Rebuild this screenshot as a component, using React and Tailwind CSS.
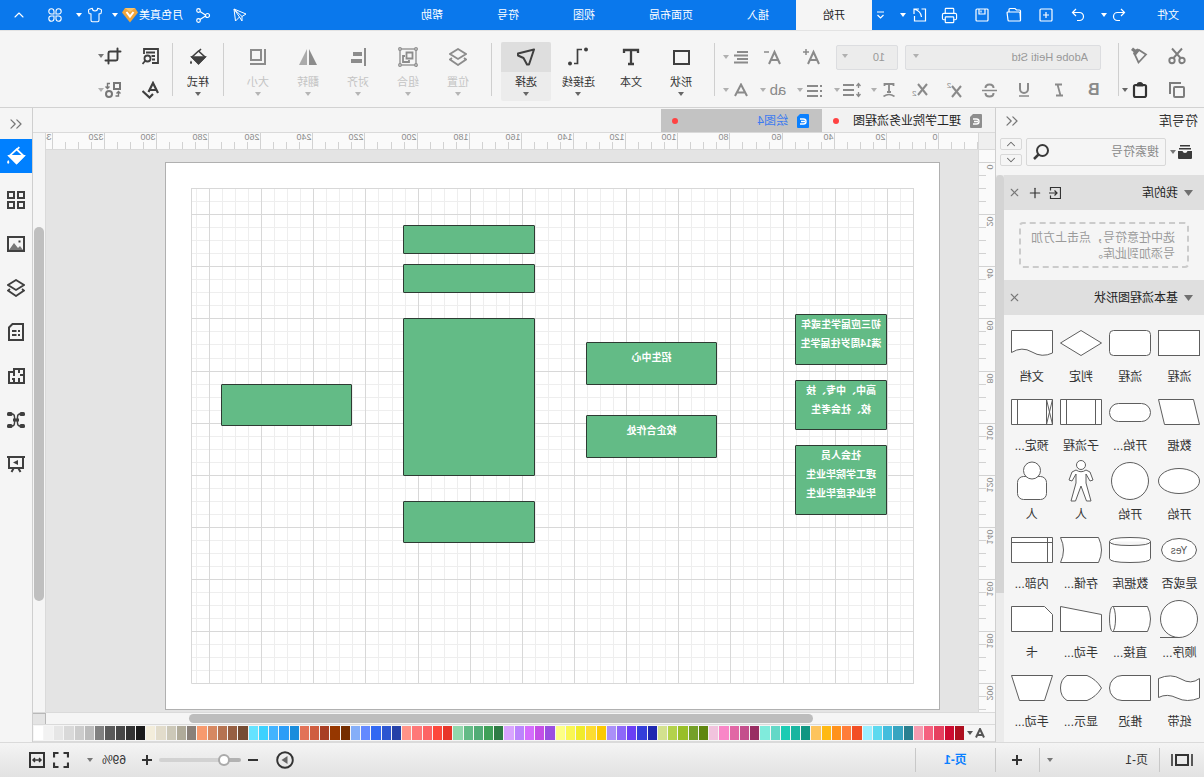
import { ChevronUp, ChevronDown, ChevronsLeft, Crop, Plus, Printer, Shirt, X } from 'lucide-react'

const UNIT = 2.607

const PALETTE = [
  ['#ae0f1f', '#cd0b30', '#e6405f', '#f5617f', '#f79bb0'],
  ['#2a8090', '#37a5c1', '#43bddd', '#5dd9ef', '#9cefff'],
  ['#f24f25', '#ff7d39', '#ff921c', '#ffb914', '#fdc45c'],
  ['#109682', '#19b5a0', '#1ccbb3', '#63d8c7', '#80ebdc'],
  ['#992d62', '#c44f8c', '#e167a5', '#f986c7', '#f1c3dd'],
  ['#5f8610', '#74a028', '#98bf28', '#b3d24b', '#d3e18e'],
  ['#1f28b0', '#343eda', '#6a3ff4', '#8d68f8', '#aa90f8'],
  ['#fbc903', '#fcdc31', '#f0eb2b', '#f9f653', '#fdff85'],
  ['#9a4fe0', '#c44fe6', '#d46dfc', '#bc84fd', '#d9a4ff'],
  ['#2f7c45', '#3fa058', '#52ac76', '#63bb86', '#91d7ac'],
  ['#e83529', '#fd483c', '#fd6465', '#fe7878', '#ff9388'],
  ['#2541a8', '#2c56d1', '#3168f2', '#6389ff', '#85aef8'],
  ['#752d00', '#963700', '#a83e24', '#cf5d40', '#e27258'],
  ['#1a8ddc', '#2b9df7', '#43b3fe', '#3dd1fe', '#65e3ff'],
  ['#754c33', '#965f42', '#b57351', '#d68861', '#f79a6e'],
  ['#898079', '#b0ab9a', '#ccc8b8', '#e2dccb', '#f3eddb'],
  ['#1a1a1a', '#333333', '#474747', '#595959', '#808080', '#bbbbbb', '#cccccc', '#d9d9d9', '#e6e6e6', '#f2f2f2', '#ffffff'],
].flat()

function Icon({ size = 18, box = 18, width = 2, className = '', children }) {
  return (
    <svg
      width={size}
      height={size}
      viewBox={`0 0 ${box} ${box}`}
      fill="none"
      stroke="currentColor"
      strokeWidth={width}
      className={`shrink-0 ${className}`}
      aria-hidden="true"
    >
      {children}
    </svg>
  )
}

function Caret({ className = '' }) {
  return (
    <svg width="6" height="4" viewBox="0 0 6 4" className={`shrink-0 ${className}`} aria-hidden="true">
      <path d="M0 0h6L3 4z" fill="currentColor" />
    </svg>
  )
}

function Divider() {
  return <div className="w-px h-[53px] mt-3 bg-[#cfcfcf] shrink-0" />
}

/* ---------- title bar ---------- */

function TitleBar() {
  const tabs = ['插入', '页面布局', '视图', '符号', '帮助']
  return (
    <header className="flex h-[30px] shrink-0 items-center bg-[#0a78ec] text-white text-[11px]">
      <button className="w-[72px] h-full">文件</button>
      <button aria-label="撤销" className="w-[25px] flex justify-center">
        <Icon size={14} box={14} width={1.2}>
          <path d="M5 1L1.5 4.5 5 8M1.5 4.5h7a4 4 0 0 1 0 8H6" />
        </Icon>
      </button>
      <Caret />
      <button aria-label="重做" className="ml-[7px] w-8 flex justify-center">
        <Icon size={14} box={14} width={1.2}>
          <path d="M9 1l3.5 3.5L9 8M12.5 4.5h-7a4 4 0 0 0 0 8H8" />
        </Icon>
      </button>
      <button aria-label="新建" className="w-8 flex justify-center">
        <Icon size={14} box={14} width={1.2}>
          <rect x="1" y="1" width="12" height="12" rx="1" />
          <path d="M7 4v6M4 7h6" />
        </Icon>
      </button>
      <button aria-label="打开" className="w-8 flex justify-center">
        <Icon size={16} box={16} width={1.2}>
          <path d="M1.5 13V4q0-1 1-1h3L7 1.500h5q1 0 1 1V5M1.500 13L2 6q0-1 1-1h11q1 0 .9 1l-.9 7q0 1-1 1H2.500q-1 0-1-1z" />
        </Icon>
      </button>
      <button aria-label="保存" className="w-8 flex justify-center">
        <Icon size={14} box={14} width={1.2}>
          <rect x="1" y="1" width="12" height="12" rx="1" />
          <path d="M4 1v5h6V1M8 2.5v2" />
        </Icon>
      </button>
      <button aria-label="打印" className="w-8 flex justify-center">
        <Printer size={17} strokeWidth={1.6} />
      </button>
      <button aria-label="导出" className="w-7 flex justify-center">
        <Icon size={14} box={14} width={1.2}>
          <path d="M5.5 1h-4v12h11V8M8 1h5v5M13 1Q6 3 5.5 9" />
        </Icon>
      </button>
      <Caret />
      <button aria-label="更多" className="ml-[10px] w-[18px] flex justify-center">
        <Icon size={9} box={9} width={1.2}>
          <path d="M1 1h7M1.5 4l3 3 3-3" />
        </Icon>
      </button>
      <nav className="flex h-full">
        <button className="w-[76px] h-full bg-[#f5f5f5] text-[#222]">开始</button>
        {tabs.map((t) => (
          <button key={t} className={t.length > 2 ? 'w-[98px]' : 'w-[76px]'}>
            {t}
          </button>
        ))}
      </nav>
      <div className="ml-auto flex items-center h-full">
        <button aria-label="发送" className="mr-[22px]">
          <Icon size={14} box={14} width={1}>
            <path d="M13 1L1 6l4 2.500zM13 1L7.500 9l4 4zM5 8.500V13l2.500-4" />
          </Icon>
        </button>
        <button aria-label="分享" className="mr-[13px]">
          <Icon size={15} box={15} width={1.2}>
            <circle cx="3.5" cy="7.5" r="2" />
            <circle cx="12.5" cy="2.5" r="1.8" />
            <circle cx="12.5" cy="12.5" r="1.8" />
            <path d="M5.500 7L11 3.500M5.500 8l5.500 3.500" />
          </Icon>
        </button>
        <button className="flex items-center">
          <span>月色真美</span>
          <svg width="16" height="15" viewBox="0 0 16 15" className="ml-px" aria-hidden="true">
            <path d="M3 0h10l3 4.500-8 10-8-10z" fill="#f0a63c" />
            <path d="M3 0h10L8 4z" fill="#f8c46c" />
            <path d="M4.500 4L8 8.500 11.500 4" fill="none" stroke="#fff" strokeWidth="2" />
          </svg>
          <Caret className="ml-1" />
        </button>
        <button aria-label="主题" className="ml-[9px] flex items-center gap-[5px]">
          <Shirt size={16} strokeWidth={1.6} />
          <Caret />
        </button>
        <button aria-label="应用" className="ml-1 w-[34px] flex justify-center">
          <Icon size={14} box={14} width={1.1}>
            <path d="M6 6H3.300A2.600 2.600 0 1 1 6 3.300zM8 6V3.300A2.600 2.600 0 1 1 10.700 6zM6 8v2.700A2.600 2.600 0 1 1 3.300 8zM8 8h2.700A2.600 2.600 0 1 1 8 10.700z" />
          </Icon>
        </button>
        <button aria-label="收起" className="w-[38px] flex justify-center">
          <ChevronUp size={16} strokeWidth={1.6} />
        </button>
      </div>
    </header>
  )
}

/* ---------- ribbon ---------- */

function BucketIcon({ size = 18 }) {
  return (
    <Icon size={size} width={1.6}>
      <path d="M6 1l2.500 2.500M8.500 3L15 9l-6.500 6.500L2 9z" />
      <path d="M2 9h13l-6.500 6.500z" fill="currentColor" />
      <path d="M16 12.500q2 2.500 0 3.500-2-1 0-3.500z" fill="currentColor" stroke="none" />
    </Icon>
  )
}

function LayersIcon() {
  return (
    <Icon width={1.8}>
      <path d="M9 1l8 5-8 5-8-5zM3 10l-2 1.500L9 17l8-5.500-2-1.500" />
    </Icon>
  )
}

function BigButton({ label, icon, caret = true, wide, disabled, active }) {
  return (
    <button
      disabled={disabled}
      className={`flex flex-col items-center h-[59px] rounded-xs text-[11px] ${wide ? 'w-[55px]' : 'w-[50px]'} ${
        disabled ? 'text-[#c4c4c4]' : 'text-[#333]'
      } ${active ? 'bg-[#ececec]' : ''}`}
    >
      <span
        className={`flex h-[30px] w-full items-center justify-center rounded-t-xs ${active ? 'bg-[#dedede]' : ''} ${
          disabled ? 'text-[#8c8c8c]' : 'text-[#3f3f3f]'
        }`}
      >
        {icon}
      </span>
      <span className="leading-4 mt-0.5">{label}</span>
      {caret && <Caret className={disabled ? 'mt-0.5 text-[#b5b5b5]' : 'mt-0.5 text-[#666]'} />}
    </button>
  )
}

function MenuTool({ label, children }) {
  return (
    <button aria-label={label} className="flex w-[37px] items-center gap-px">
      <span className="flex w-[22px] justify-center">{children}</span>
      <Caret className="text-[#b0b0b0]" />
    </button>
  )
}

function FontGroup() {
  const tool = 'w-[35px] flex justify-center items-baseline'
  const select =
    'h-[25px] w-full appearance-none rounded-xs border border-[#dcdde0] bg-[#ececec] pl-3 text-[11px] text-[#999]'
  return (
    <div className="w-[403px] pt-[10px] text-[#8a8a8a] shrink-0">
      <div className="flex h-8 items-center pl-[17px]">
        <label className="relative w-[196px]">
          <select aria-label="字体" className={select}>
            <option>Adobe Heiti Std</option>
          </select>
          <Caret className="absolute right-2 top-[10px] text-[#b0b0b0]" />
        </label>
        <label className="relative ml-[7px] w-[62px]">
          <select aria-label="字号" className={select}>
            <option>10</option>
          </select>
          <Caret className="absolute right-1.5 top-[10px] text-[#b0b0b0]" />
        </label>
        <button aria-label="增大字号" className="flex w-[50px] justify-center">
          <Icon>
            <path d="M1 16L6.500 4 12 16M3 12h7" />
            <path d="M11 4h6M14 1v6" strokeWidth="1.5" />
          </Icon>
        </button>
        <button aria-label="减小字号" className="flex w-7 justify-center">
          <Icon>
            <path d="M1 16L6.500 4 12 16M3 12h7" />
            <path d="M12 4h5" strokeWidth="1.5" />
          </Icon>
        </button>
        <button aria-label="对齐方式" className="ml-[10px] flex items-center gap-[5px]">
          <Icon size={14} box={14}>
            <path d="M0 2h11M0 5.500h14M0 9h11M0 12.500h14" strokeWidth="1.8" />
          </Icon>
          <Caret className="text-[#b0b0b0]" />
        </button>
      </div>
      <div className="flex h-[34px] items-center pl-[7px] text-base">
        <button aria-label="加粗" className={`${tool} font-bold`}>B</button>
        <button aria-label="斜体" className={tool}>
          <Icon size={14} box={14}>
            <path d="M4 1.500h7M3 12.500h7M8.500 1.500l-3 11" strokeWidth="1.8" />
          </Icon>
        </button>
        <button aria-label="下划线" className={tool}>
          <Icon size={14} box={14}>
            <path d="M3 0v6a4 4 0 0 0 8 0V0" />
            <path d="M2 13h10" strokeWidth="1.5" />
          </Icon>
        </button>
        <button aria-label="删除线" className={tool}>
          <Icon size={15} box={15}>
            <path d="M11.500 5q0-3.500-4-3.500T3.500 5M3.500 10q0 3.500 4 3.500t4-3.500" />
            <path d="M0 7.500h15" strokeWidth="1.5" />
          </Icon>
        </button>
        <button aria-label="上标" className={tool}>
          <Icon>
            <path d="M2 5l9 11M11 5L2 16" />
          </Icon>
          <span className="-ml-1.5 self-start text-[8px] leading-[10px]">2</span>
        </button>
        <button aria-label="下标" className={tool}>
          <Icon>
            <path d="M2 3l9 11M11 3L2 14" />
          </Icon>
          <span className="-ml-1.5 self-end text-[8px] leading-[10px]">2</span>
        </button>
        <div className="ml-[3px] flex">
          <MenuTool label="文字方向">
            <Icon size={14} box={14}>
              <path d="M2.500 3V1h9v2M7 1v8M5 9h4" strokeWidth="1.8" />
              <path d="M1.500 13.500Q7 9.500 12.500 13.500" strokeWidth="1.6" />
            </Icon>
          </MenuTool>
          <MenuTool label="行距">
            <Icon>
              <path d="M7 4h11M7 9h11M7 14h11" />
              <path d="M2.500 3v4M2.500 11v4M.5 5l2-2.500 2 2.500M.5 13l2 2.500 2-2.500" strokeWidth="1.3" />
            </Icon>
          </MenuTool>
          <MenuTool label="项目符号">
            <Icon size={15} box={15}>
              <path d="M4 3h11M4 8h11M4 13h11M0 3h2M0 8h2M0 13h2" />
            </Icon>
          </MenuTool>
          <MenuTool label="大小写">
            <span className="text-[15px] leading-4">ab</span>
          </MenuTool>
          <MenuTool label="字体颜色">
            <Icon size={14} box={14}>
              <path d="M1 13L7 1.500 13 13M3.500 9.500h7" />
            </Icon>
          </MenuTool>
        </div>
      </div>
    </div>
  )
}

function Ribbon() {
  return (
    <div className="flex h-[78px] shrink-0 border-b border-[#d2d2d2] border-t border-t-[#e3e3e3] bg-[#f5f5f5]">
      <div className="w-[85px] shrink-0 pt-2 text-[#7d7d7d]">
        <div className="flex h-[34px] items-center gap-5 pl-[18px]">
          <button aria-label="剪切">
            <Icon width={1.9}>
              <circle cx="4" cy="13.500" r="2.700" />
              <circle cx="14" cy="13.500" r="2.700" />
              <path d="M5.500 11L14 1.500M12.500 11L4 1.500" />
            </Icon>
          </button>
          <button aria-label="格式刷">
            <Icon width={1.8}>
              <path d="M2 7.500L9 3l4 5-3.500 7.500z" />
              <path d="M8.500 3L13 8.500l2-1.500-.5-2L17 3l-2-2.500-2.500 2-2-1z" fill="currentColor" stroke="none" />
            </Icon>
          </button>
        </div>
        <div className="flex h-[34px] items-center gap-5 pl-[18px]">
          <button aria-label="复制">
            <Icon width={2}>
              <rect x="2" y="6" width="10" height="10" rx="1" />
              <path d="M5 2h11v11" />
            </Icon>
          </button>
          <button aria-label="粘贴" className="flex items-center gap-1 text-[#333]">
            <Icon size={16} box={16} width={2.2}>
              <rect x="2" y="3" width="12" height="12" rx="1.500" />
              <path d="M5.500 3.500Q5.500 1 8 1t2.500 2.500z" strokeWidth="1.8" />
            </Icon>
            <Caret className="text-[#666]" />
          </button>
        </div>
      </div>
      <Divider />
      <FontGroup />
      <Divider />
      <div className="flex pl-2 pr-[9px] pt-[11px]">
        <BigButton label="形状" icon={<Icon><rect x="1" y="3" width="15" height="13" /></Icon>} />
        <BigButton
          label="文本"
          caret={false}
          icon={<Icon><path d="M2 5V2h14v3M9 2v14M6 16h6" strokeWidth="2.300" /></Icon>}
        />
        <BigButton
          label="连接线"
          wide
          icon={
            <Icon size={20} box={20}>
              <path d="M6 2.500h4.500v14H14" strokeWidth="1.700" />
              <circle cx="2" cy="2.500" r="2" fill="currentColor" stroke="none" />
              <circle cx="18" cy="16.500" r="2" fill="currentColor" stroke="none" />
            </Icon>
          }
        />
        <BigButton
          label="选择"
          active
          icon={<Icon><path d="M1 1.500l16 4v2L11.500 10 8 16.500H6z" strokeLinejoin="round" /></Icon>}
        />
      </div>
      <Divider />
      <div className="flex pl-2 pr-[9px] pt-[11px]">
        <BigButton label="位置" disabled icon={<LayersIcon />} />
        <BigButton
          label="组合"
          disabled
          icon={
            <Icon size={20} box={20} width={1.300}>
              <rect x="2" y="2" width="16" height="16" />
              <g fill="#f5f5f5">
                <circle cx="2" cy="2" r="1.300" />
                <circle cx="18" cy="2" r="1.300" />
                <circle cx="2" cy="18" r="1.300" />
                <circle cx="18" cy="18" r="1.300" />
              </g>
              <path d="M5.500 5.500h6v6h-6zM13 9h2v6H9v-2" strokeWidth="1.800" />
            </Icon>
          }
        />
        <BigButton
          label="对齐"
          disabled
          icon={
            <Icon>
              <path d="M2 0v18" />
              <path d="M5 4h9v4H5zM5 11h11v4H5z" fill="currentColor" stroke="none" />
            </Icon>
          }
        />
        <BigButton
          label="翻转"
          disabled
          icon={
            <Icon>
              <path d="M8 1v16H0z" fill="currentColor" stroke="none" />
              <path d="M10 1v16h8z" fill="#aaa" stroke="none" />
            </Icon>
          }
        />
        <BigButton
          label="大小"
          disabled
          icon={<Icon><path d="M6 2h10v10H6zM2 1v15h15" /></Icon>}
        />
      </div>
      <Divider />
      <div className="flex pt-[11px]">
        <BigButton label="样式" icon={<BucketIcon />} />
      </div>
      <Divider />
      <div className="pt-2 text-[#3f3f3f]">
        <div className="flex h-[34px] items-center gap-5 pl-3">
          <button aria-label="查找">
            <Icon width={1.8}>
              <path d="M8 16H2V2h14v5M5 5.500h9M5 9h3.500M5 12.500h3" />
              <circle cx="12.500" cy="11.500" r="3" />
              <path d="M14.500 13.500l3 3.500" />
            </Icon>
          </button>
          <button aria-label="裁剪" className="flex items-center">
            <Crop size={18} strokeWidth={2.6} />
            <Caret className="text-[#777]" />
          </button>
        </div>
        <div className="flex h-[34px] items-center gap-5 pl-3">
          <button aria-label="拼写检查">
            <Icon width={2.2}>
              <path d="M2 12L7 2l4.500 9M4 9h6M7 13l3.500 3.500L17.500 10" />
            </Icon>
          </button>
          <button aria-label="替换" className="flex items-center text-[#777]">
            <Icon>
              <rect x="2" y="2" width="6" height="6" />
              <circle cx="13" cy="13" r="3" />
              <path d="M12 2.500h2.500V7M12.500 5.500l2 2 2-2M6.500 15h-3v-4M1.500 12.500l2-2 2 2" strokeWidth="1.400" />
            </Icon>
            <Caret className="text-[#b0b0b0]" />
          </button>
        </div>
      </div>
    </div>
  )
}

/* ---------- symbol library ---------- */

const SYMBOLS = [
  { name: '流程', art: <rect x="0.5" y="8.5" width="41" height="25" /> },
  { name: '流程', art: <rect x="0.5" y="8.5" width="41" height="25" rx="4" /> },
  { name: '判定', art: <path d="M21 8.500L41.500 21 21 33.500.5 21z" /> },
  { name: '文档', art: <path d="M.5 8.500h41v22Q31 24 21 30T.5 31z" /> },
  { name: '数据', art: <path d="M6.500 8.500h35l-6 25H.5z" /> },
  { name: '开始...', art: <rect x="0.5" y="12.5" width="41" height="18" rx="9" /> },
  { name: '子流程', art: <path d="M.5 8.500h41v25H.5zM6.500 8.500v25M35.500 8.500v25" /> },
  { name: '预定...', art: <path d="M.5 8.500h41v25H.5zM6.500 8.500v25M35.500 8.500v25M.5 8.500l6 25M6.500 8.500l-6 25" /> },
  { name: '开始', art: <ellipse cx="21" cy="21" rx="20.5" ry="12.5" /> },
  { name: '开始', art: <circle cx="21" cy="21" r="18.5" /> },
  {
    name: '人',
    art: (
      <>
        <path d="M16 10l-4 2-3 8 3 1 4-7v9l-5 18h4.500L21 26l5.500 15H31l-5-18v-9l4 7 3-1-3-8-4-2q-5 3.500-10 0z" />
        <circle cx="21" cy="5" r="4.5" />
      </>
    ),
  },
  {
    name: '人',
    art: (
      <>
        <rect x="6.5" y="16.5" width="29" height="23" rx="6" />
        <circle cx="21" cy="10.5" r="8.5" />
      </>
    ),
  },
  {
    name: '是或否',
    art: (
      <>
        <ellipse cx="21" cy="21" rx="17.5" ry="11.5" />
        <text x="21" y="25" textAnchor="middle" fontSize="10" fill="#555" stroke="none">Yes</text>
      </>
    ),
  },
  { name: '数据库', art: <path d="M.5 12.500v17q0 4 20.500 4t20.500-4v-17M.5 12.500q0-4 20.500-4t20.500 4-20.500 4-20.500-4z" /> },
  { name: '存储...', art: <path d="M3.500 8.500h38q-6 12.500 0 25h-38q-6-12.500 0-25z" /> },
  { name: '内部...', art: <path d="M.5 8.500h41v25H.5zM5.500 8.500v25M.5 13.500h41" /> },
  { name: '顺序...', art: <><circle cx="21" cy="21" r="18.5" /><path d="M21 39.500h19" /></> },
  { name: '直接...', art: <><path d="M38.500 8.500h-35q-6 12.500 0 25h35" /><ellipse cx="38.5" cy="21" rx="3" ry="12.5" /></> },
  { name: '手动...', art: <path d="M.5 16.500l41-8v25H.5z" /> },
  { name: '卡', art: <path d="M8.500 8.500h33v25H.5v-17z" /> },
  { name: '纸带', art: <path d="M.5 11.500Q9 18 19 12t22.500-.5v19Q33 26 23 31T.5 31z" /> },
  { name: '推迟', art: <path d="M.5 8.500H29a12.500 12.500 0 0 1 0 25H.5z" /> },
  { name: '显示...', art: <path d="M.5 21Q6 12 15 8.500h20q6.500 4 6.500 12.500T35 33.500H15Q6 30 .5 21z" /> },
  { name: '手动...', art: <path d="M.5 8.500h41l-8 25h-25z" /> },
]

function SectionHeader({ title, children }) {
  return (
    <div className="flex h-[35px] items-center bg-[#dfdfdf] pl-[11px] pr-1 text-xs text-[#222]">
      <svg width="9" height="6" viewBox="0 0 9 6" className="mr-1.5" aria-hidden="true">
        <path d="M0 0h9L4.500 6z" fill="#707070" />
      </svg>
      <h2 className="flex-1">{title}</h2>
      <div className="flex items-center gap-1.5 text-[#333]">
        {children}
        <button aria-label="关闭" className="text-[#777]">
          <X size={13} strokeWidth={2} />
        </button>
      </div>
    </div>
  )
}

function SymbolPanel() {
  return (
    <aside className="flex w-[209px] shrink-0 flex-col border-r border-[#cfcfcf] bg-[#f5f5f5] text-[#333]">
      <div className="flex h-[25px] items-center justify-between pl-[6px] pr-[6px]">
        <h1 className="text-[13px]">符号库</h1>
        <button aria-label="折叠" className="text-[#777]">
          <ChevronsLeft size={20} strokeWidth={1.5} />
        </button>
      </div>
      <div className="flex items-center pl-3 pr-1 pt-[5px]">
        <button aria-label="符号库菜单" className="flex items-center gap-0.5 text-[#3a3a3a]">
          <svg width="14" height="14" viewBox="0 0 14 14" fill="currentColor" aria-hidden="true">
            <path d="M2 0h10v1.500H2zM1 3h12v1.500H1zM0 6h4.500Q5 8 7 8t2.500-2H14v7q0 1-1 1H1q-1 0-1-1z" />
          </svg>
          <Caret className="text-[#777]" />
        </button>
        <label className="ml-1 flex h-[28px] w-[140px] items-center rounded-xs border border-[#d8d8d8] pl-1.5 pr-1.5">
          <input aria-label="搜索符号" placeholder="搜索符号" className="w-0 flex-1 bg-transparent text-xs placeholder:text-[#8a8a8a]" />
          <Icon size={16} box={16} className="text-[#3a3a3a]">
            <circle cx="6.500" cy="6.500" r="5.500" />
            <path d="M10.500 10.500L15 15" strokeWidth="2.5" />
          </Icon>
        </label>
        <div className="ml-1 flex flex-1 flex-col gap-1 text-[#666]">
          <button aria-label="上一个" className="flex h-3 items-center justify-center rounded-xs border border-[#d8d8d8]">
            <ChevronUp size={14} strokeWidth={1.8} />
          </button>
          <button aria-label="下一个" className="flex h-3 items-center justify-center rounded-xs border border-[#d8d8d8]">
            <ChevronDown size={14} strokeWidth={1.8} />
          </button>
        </div>
      </div>
      <div className="mt-[9px] flex flex-1">
        <div className="w-[200px]">
          <SectionHeader title="我的库">
            <button aria-label="导入">
              <Icon size={12} box={12} width={1.2}>
                <path d="M10.500 3.500v-3H.5v11h10v-3M12 6H4M6.500 3.500L4 6l2.500 2.500" />
              </Icon>
            </button>
            <button aria-label="添加">
              <Plus size={16} strokeWidth={1.8} />
            </button>
          </SectionHeader>
          <div className="mx-[15px] my-3 h-[46px] rounded-sm border-2 border-dashed border-[#cbcbcb] pl-[12px] pt-1.5 text-xs leading-4 text-[#9a9a9a]">
            <p className="w-[148px]">选中任意符号，点击上方加号添加到此库。</p>
          </div>
          <SectionHeader title="基本流程图形状" />
          <ul className="grid w-[197px] grid-cols-4 pt-[5px]">
            {SYMBOLS.map((s, i) => (
              <li key={i} className="flex h-[69px] flex-col items-center text-xs">
                <svg width="42" height="46" viewBox="0 -2 42 46" fill="#fff" stroke="#5e5e5e" aria-hidden="true">
                  {s.art}
                </svg>
                <span className="mt-0.5 leading-[18px]">{s.name}</span>
              </li>
            ))}
          </ul>
        </div>
        <div className="w-2 bg-[#ebebeb]">
          <div className="h-[418px] rounded-t-full bg-[#d4d4d4]" />
        </div>
      </div>
    </aside>
  )
}

/* ---------- drawing area ---------- */

function DocTab({ name, active, color }) {
  return (
    <button
      className={`flex h-[23px] items-center pl-[13px] pr-[11px] text-xs ${
        active ? 'w-[161px] bg-[#c3c3c3] text-[#3d7bf0]' : 'w-[173px] bg-[#f2f2f2] text-[#222]'
      }`}
    >
      <svg width="12" height="14" viewBox="0 0 12 14" className="mr-[9px]" aria-hidden="true">
        <path d="M1 0h8l3 3v10q0 1-1 1H1q-1 0-1-1V1q0-1 1-1z" fill={color} />
        <path d="M9 5H5.500a2.500 2.500 0 0 0 0 5H9M4 7.500h4" fill="none" stroke="#fff" strokeWidth="1.4" />
      </svg>
      {name}
      <span className="ml-auto size-1.5 rounded-full bg-[#ff4242]" />
    </button>
  )
}

// ruler ticks every 5 units, a number every 20; origin is the pixel of the zero mark
function Ruler({ vertical, origin, from, to }) {
  const marks = []
  for (let u = from; u <= to; u += 5) marks.push(u)
  return (
    <svg
      className={vertical ? 'h-full w-4 shrink-0 bg-[#fafafa]' : 'h-4 min-w-0 flex-1 bg-[#fafafa]'}
      stroke="#d2d2d2"
      fontSize="9"
      aria-hidden="true"
    >
      {marks.map((u) => {
        const p = Math.round(origin + u * UNIT) + 0.5
        const start = u % 20 === 0 ? 0 : 9
        return (
          <g key={u}>
            {vertical ? <path d={`M${start} ${p}H16`} /> : <path d={`M${p} ${start}V16`} />}
            {u % 20 === 0 && (
              <text
                x={vertical ? 0 : p + 1}
                y={vertical ? 0 : 7}
                transform={vertical ? `translate(8 ${p + 2}) rotate(-90)` : undefined}
                textAnchor={vertical ? 'end' : 'start'}
                fill="#8c8c8c"
                stroke="none"
              >
                {Math.abs(u)}
              </text>
            )}
          </g>
        )
      })}
    </svg>
  )
}

function GridLines() {
  const cols = []
  const rows = []
  for (let u = 10; u < 287; u += 5) cols.push(u)
  for (let u = 10; u <= 200; u += 5) rows.push(u)
  const at = (u) => Math.round(u * UNIT) - 0.5
  const minor = (u) => u % 20 !== 0 && u !== 10
  const xs = cols.map((u) => ({ p: at(u), minor: minor(u) })).concat({ p: at(287), minor: false })
  const ys = rows.map((u) => ({ p: at(u), minor: minor(u) }))
  const x2 = at(287)
  const y2 = at(200)
  return (
    <svg className="absolute inset-0 size-full" aria-hidden="true">
      {[true, false].map((m) => (
        <g key={String(m)} stroke={m ? '#eeeeee' : '#d8d8d8'}>
          {xs.filter((l) => l.minor === m).map((l) => <path key={`x${l.p}`} d={`M${l.p} 25V${y2}`} />)}
          {ys.filter((l) => l.minor === m).map((l) => <path key={`y${l.p}`} d={`M25 ${l.p}H${x2}`} />)}
        </g>
      ))}
    </svg>
  )
}

const NODES = [
  { box: 'left-[52px] top-[151px] w-[92px] h-[51px]', lines: ['初三应届学生或年', '满14周岁往届学生'] },
  { box: 'left-[52px] top-[217px] w-[92px] h-[50px]', lines: ['高中、中专、技', '校、社会考生'] },
  { box: 'left-[52px] top-[282px] w-[92px] h-[70px]', lines: ['社会人员', '理工学院毕业生', '毕业年度毕业生'] },
  { box: 'left-[222px] top-[179px] w-[131px] h-[43px] pt-[5px]', lines: ['招生中心'] },
  { box: 'left-[222px] top-[252px] w-[131px] h-[43px] pt-[5px]', lines: ['校企合作处'] },
  { box: 'left-[404px] top-[62px] w-[132px] h-[29px]', lines: [] },
  { box: 'left-[404px] top-[101px] w-[132px] h-[29px]', lines: [] },
  { box: 'left-[404px] top-[155px] w-[132px] h-[158px]', lines: [] },
  { box: 'left-[404px] top-[338px] w-[132px] h-[42px]', lines: [] },
  { box: 'left-[587px] top-[221px] w-[131px] h-[42px]', lines: [] },
]

function Canvas() {
  return (
    <div className="min-w-0 flex-1 overflow-hidden bg-[#e4e4e4] pl-[38px] pt-3">
      <div className="relative h-[548px] w-[775px] border border-[#b0b0b0] bg-white">
        <GridLines />
        {NODES.map((n, i) => (
          <div
            key={i}
            className={`absolute rounded-[1px] border border-[#2e3b33] bg-[#63bb86] text-center text-[10px] font-bold leading-[19px] text-white ${n.box}`}
          >
            {n.lines.map((l) => (
              <p key={l}>{l}</p>
            ))}
          </div>
        ))}
      </div>
    </div>
  )
}

function Workspace() {
  return (
    <main className="flex min-w-0 flex-1 flex-col bg-[#f5f5f5]">
      <div className="flex h-[25px] shrink-0 border-b border-[#dadada] pt-px">
        <DocTab name="理工学院业务流程图" color="#8e8e8e" />
        <DocTab name="绘图4" color="#0a80ff" active />
      </div>
      <div className="flex min-h-0 flex-1">
        <div className="flex min-w-0 flex-1 flex-col">
          <div className="flex h-[17px] shrink-0 border-b border-[#dadada]">
            <div className="w-[17px] border-r border-[#dadada] bg-[#efefef]" />
            <Ruler origin={39} from={-20} to={350} />
          </div>
          <div className="flex min-h-0 flex-1">
            <div className="w-[17px] border-r border-[#dadada]">
              <Ruler vertical origin={12} from={0} to={210} />
            </div>
            <Canvas />
          </div>
        </div>
        <div className="w-[13px] shrink-0 border-l border-[#dadada] px-px pt-[94px]">
          <div className="h-[374px] rounded-full bg-[#bfbfbf]" />
        </div>
      </div>
      <div className="flex h-[13px] shrink-0 border-y border-[#dadada]">
        <div className="flex-1 pl-[182px] pt-px">
          <div className="h-[9px] w-[624px] rounded-full bg-[#bdbdbd]" />
        </div>
        <div className="w-[13px] border-l border-t border-[#b8b8b8] bg-[#e4e4e4]" />
      </div>
      <div className="flex h-[17px] shrink-0 items-center border-b border-[#dadada]">
        <button aria-label="填充颜色" className="flex w-[31px] items-center gap-0.5 pl-2.5 text-[#555]">
          <Icon size={10} box={10}>
            <path d="M1 9.500L5 1l4 8.500M2.500 7h5" />
          </Icon>
          <Caret />
        </button>
        <div className="flex h-[14px] flex-1 gap-px">
          {PALETTE.map((c) => (
            <button key={c} aria-label={c} className="flex-1" style={{ backgroundColor: c }} />
          ))}
        </div>
      </div>
    </main>
  )
}

/* ---------- side tools ---------- */

const SIDE_TOOLS = [
  {
    name: '符号',
    icon: <Icon><path d="M1 1h6v6H1zM11 1h6v6h-6zM1 11h6v6H1zM11 11h6v6h-6z" /></Icon>,
  },
  {
    name: '图片',
    icon: (
      <Icon>
        <rect x="1" y="2" width="16" height="14" />
        <path d="M2 15l3-4 2 2 4-5 5 7z" fill="#777" stroke="none" />
        <path d="M4.500 5.500h2v2h-2z" fill="currentColor" stroke="none" />
      </Icon>
    ),
  },
  { name: '图层', icon: <LayersIcon /> },
  {
    name: '备注',
    icon: <Icon><path d="M2 1h10.500L16 4.500V17H2zM5 8h2M8.500 8H13M5 12h2M8.500 12H13" /></Icon>,
  },
  {
    name: '平面图',
    icon: <Icon><path d="M1 2h10v3h5v11H1zM6 2v4M1 8h4M11 5v4M6 16v-5M11 16v-4h2" /></Icon>,
  },
  {
    name: '思维导图',
    icon: (
      <Icon>
        <path d="M5 3q2.500 0 2.500 3T9 9t1.500-3T13 3M5 15q2.500 0 2.500-3T9 9t1.500 3 2.500 3" strokeWidth="1.4" />
        <g fill="currentColor" stroke="none">
          <rect x="0" y="1" width="5.500" height="4" rx="1.500" />
          <rect x="12.500" y="1" width="5.500" height="4" rx="1.500" />
          <rect x="0" y="13" width="5.500" height="4" rx="1.500" />
          <rect x="12.500" y="13" width="5.500" height="4" rx="1.500" />
          <rect x="6" y="7.500" width="6" height="3" />
        </g>
      </Icon>
    ),
  },
  {
    name: '演示',
    icon: (
      <Icon>
        <path d="M0 2h18M2 2v11h14V2M6.500 13.500l-2 3.500M11.500 13.500l2 3.500" />
        <path d="M7 5l5 2.500L7 10z" fill="currentColor" stroke="none" />
      </Icon>
    ),
  },
]

function SideTools() {
  return (
    <aside className="flex w-[33px] shrink-0 flex-col items-stretch gap-[10px] border-l border-[#cfcfcf] bg-[#f5f5f5] text-[#3f3f3f]">
      <div>
        <button aria-label="展开" className="flex h-[31px] w-full items-center justify-center text-[#777]">
          <ChevronsLeft size={20} strokeWidth={1.5} />
        </button>
        <button aria-label="填充" className="flex h-[34px] w-full items-center justify-center bg-[#0080ff] text-white">
          <BucketIcon size={20} />
        </button>
      </div>
      {SIDE_TOOLS.map((t) => (
        <button key={t.name} aria-label={t.name} className="flex h-[34px] items-center justify-center">
          {t.icon}
        </button>
      ))}
    </aside>
  )
}

/* ---------- status bar ---------- */

function StatusBar() {
  return (
    <footer className="flex h-[35px] shrink-0 items-center border-t border-[#dadada] bg-linear-to-b from-[#f4f4f4] to-[#e2e2e2] text-xs text-[#333]">
      <button aria-label="视图" className="flex w-11 justify-center">
        <Icon size={22} box={22}>
          <path d="M1 5v12M21 5v12" strokeWidth="1.6" />
          <rect x="5" y="6" width="12" height="10" />
        </Icon>
      </button>
      <div className="h-6 w-px bg-[#c8c8c8]" />
      <label className="relative w-[119px]">
        <select aria-label="页面" className="w-full appearance-none bg-transparent pl-[11px]">
          <option>页-1</option>
        </select>
        <Caret className="absolute right-[7px] top-[6px] text-[#777]" />
      </label>
      <div className="h-6 w-px bg-[#c8c8c8]" />
      <button aria-label="新增页面" className="flex w-[43px] justify-center">
        <Icon size={10} box={10}>
          <path d="M5 0v10M0 5h10" />
        </Icon>
      </button>
      <div className="h-6 w-px bg-[#c8c8c8]" />
      <button className="w-[79px] font-bold text-[#0a80ff]">页-1</button>
      <div className="h-6 w-px bg-[#c8c8c8]" />
      <div className="ml-auto flex items-center pr-[29px]">
        <button aria-label="播放" className="mr-[18px]">
          <Icon>
            <circle cx="9" cy="9" r="7.800" strokeWidth="1.9" />
            <path d="M6.500 5l6 4-6 4z" fill="#666" stroke="none" />
          </Icon>
        </button>
        <button aria-label="缩小" className="mr-[7px]">
          <Icon size={10} box={10}>
            <path d="M0 5h10" />
          </Icon>
        </button>
        <input
          type="range"
          aria-label="缩放"
          min="0"
          max="100"
          defaultValue="16"
          className="h-3 w-[82px] appearance-none bg-transparent [&::-webkit-slider-runnable-track]:h-1 [&::-webkit-slider-runnable-track]:rounded-full [&::-webkit-slider-runnable-track]:bg-linear-to-r [&::-webkit-slider-runnable-track]:from-[#b2b2b2] [&::-webkit-slider-runnable-track]:from-20% [&::-webkit-slider-runnable-track]:to-[#d2d2d2] [&::-webkit-slider-runnable-track]:to-20% [&::-webkit-slider-thumb]:-mt-1 [&::-webkit-slider-thumb]:size-3 [&::-webkit-slider-thumb]:appearance-none [&::-webkit-slider-thumb]:rounded-full [&::-webkit-slider-thumb]:border-2 [&::-webkit-slider-thumb]:border-[#aaa] [&::-webkit-slider-thumb]:bg-white"
        />
        <button aria-label="放大" className="ml-[7px] mr-[15px]">
          <Icon size={10} box={10}>
            <path d="M5 0v10M0 5h10" />
          </Icon>
        </button>
        <button className="flex items-center gap-2">
          <span className="w-[26px]">69%</span>
          <Caret className="text-[#777]" />
        </button>
        <button aria-label="全屏" className="ml-[18px] mr-2">
          <Icon size={16} box={16} width={2.2}>
            <path d="M1 5.500V1h4.500M10.500 1H15v4.500M15 10.500V15h-4.500M5.500 15H1v-4.500" />
          </Icon>
        </button>
        <button aria-label="适合页宽">
          <Icon size={16} box={16}>
            <rect x="1" y="1" width="14" height="14" />
            <path d="M4 8h8M6 6L4 8l2 2M10 6l2 2-2 2" strokeWidth="1.5" />
          </Icon>
        </button>
      </div>
    </footer>
  )
}

export default function App() {
  return (
    <div className="flex h-screen -scale-x-100 flex-col overflow-hidden bg-[#f5f5f5] font-['Liberation_Sans','Noto_Sans_CJK_SC',sans-serif] whitespace-nowrap [&_p]:whitespace-normal">
      <TitleBar />
      <Ribbon />
      <div className="flex min-h-0 flex-1">
        <SymbolPanel />
        <Workspace />
        <SideTools />
      </div>
      <StatusBar />
    </div>
  )
}
